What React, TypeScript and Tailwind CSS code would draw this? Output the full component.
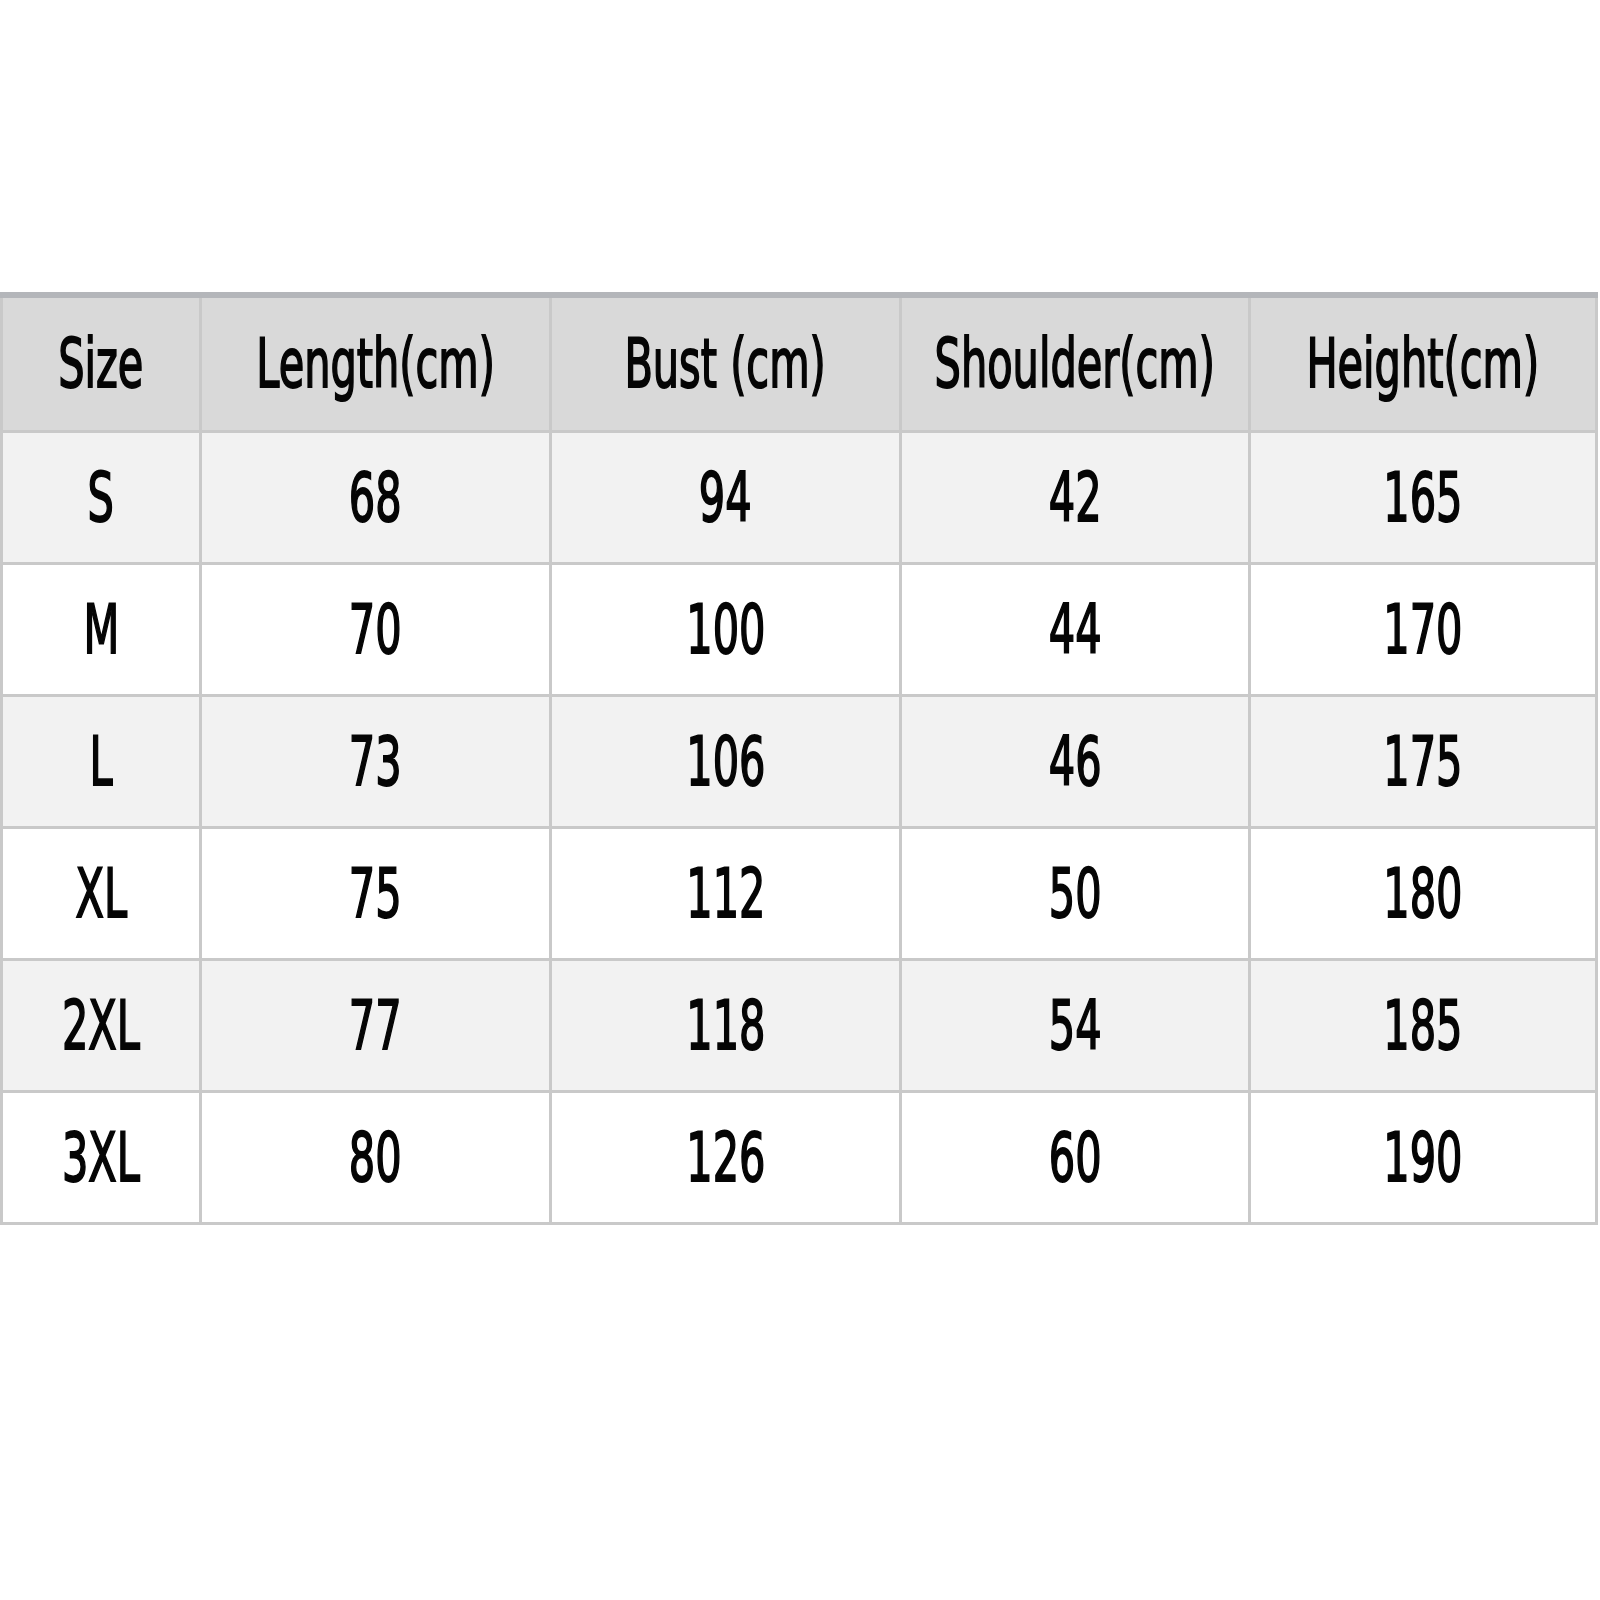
import React from "react";

const headers = ["Size", "Length(cm)", "Bust (cm)", "Shoulder(cm)", "Height(cm)"];
const rows = [
  ["S", "68", "94", "42", "165"],
  ["M", "70", "100", "44", "170"],
  ["L", "73", "106", "46", "175"],
  ["XL", "75", "112", "50", "180"],
  ["2XL", "77", "118", "54", "185"],
  ["3XL", "80", "126", "60", "190"],
];

function Txt({ children }: { children: React.ReactNode }) {
  return (
    <span className="inline-block scale-x-[0.61] whitespace-nowrap text-[68px] leading-none text-[#050505] [-webkit-text-stroke:2px_#050505] [font-family:'DejaVu_Sans',Verdana,sans-serif]">
      {children}
    </span>
  );
}

export default function App() {
  return (
    <div className="w-[1600px] h-[1600px] bg-white overflow-hidden">
      <div className="pt-[292px]">
        <div className="w-[1598px] grid grid-cols-[196px_347px_347px_346px_344px] gap-[3px] bg-[#c9c9c9] border-t-[6px] border-t-[#b4b6ba] px-[3px] pb-[3px]">
          {headers.map((h) => (
            <div key={h} className="h-[132px] bg-[#d9d9d9] flex items-center justify-center">
              <Txt>{h}</Txt>
            </div>
          ))}
          {rows.map((r, i) =>
            r.map((c, j) => (
              <div
                key={i + "-" + j}
                className={
                  "h-[129px] flex items-center justify-center " +
                  (i % 2 === 0 ? "bg-[#f2f2f2]" : "bg-white")
                }
              >
                <Txt>{c}</Txt>
              </div>
            ))
          )}
        </div>
      </div>
    </div>
  );
}
